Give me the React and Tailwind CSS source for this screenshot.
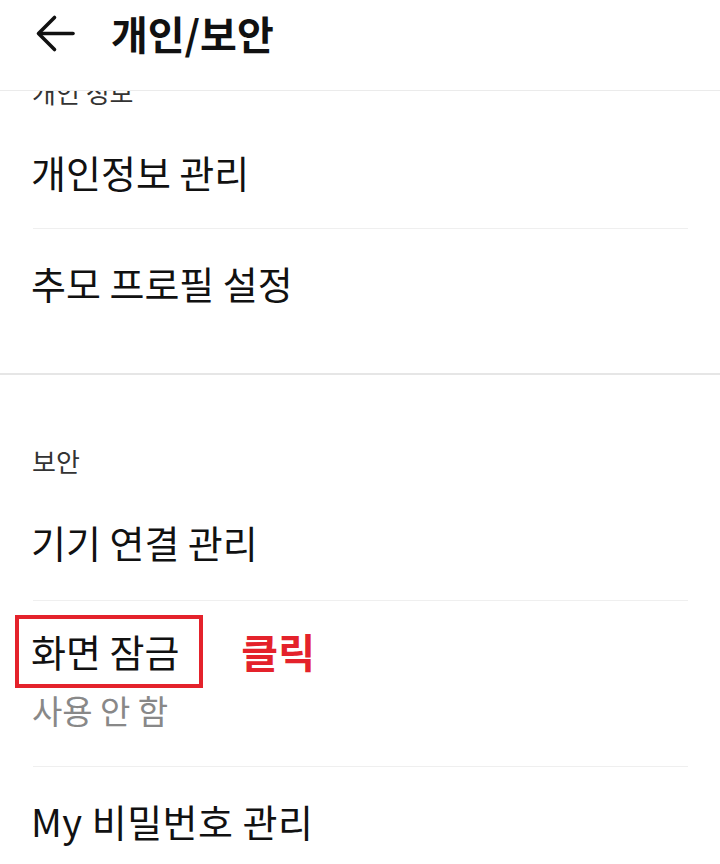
import React from 'react';

const font = { fontFamily: '"Noto Sans CJK KR", "Noto Sans", sans-serif' };

const Divider = () => <div className="h-px bg-[#efefef] ml-[33px] mr-[32px]" />;

const Row = ({ children, className = '' }) => (
    <div className={`flex items-center px-[31px] text-[38px] text-[#111] leading-none ${className}`}>
        {children}
    </div>
);

const App = () => {
    return (
        <div className="w-[720px] h-[864px] bg-white overflow-hidden flex flex-col" style={font}>
            {/* header */}
            <div className="relative z-10 h-[91px] shrink-0 bg-white border-b border-[#ebebeb] flex items-start pt-[10px]">
                <svg className="ml-[35px] mt-[3px]" width="40" height="40" viewBox="0 0 40 40" fill="none" stroke="#111" strokeWidth="3.6" strokeLinecap="round" strokeLinejoin="round">
                    <path d="M38 20.5H4.5" />
                    <path d="M19.5 4.5L3.5 20.5L19.5 36.5" />
                </svg>
                <h1 className="ml-[36px] text-[40px] font-bold text-[#111] leading-[46px]">개인/보안</h1>
            </div>

            <div className="flex-1 overflow-hidden">
                {/* 개인 정보 */}
                <div className="-mt-[20px] h-[40px] flex items-center px-[32px] text-[26px] text-[#333]">개인 정보</div>
                <Row className="h-[117px] pt-[4px]">개인정보 관리</Row>
                <Divider />
                <Row className="h-[112px] pb-[4px]">추모 프로필 설정</Row>
                <div className="h-[32px]" />
                <div className="h-[2px] bg-[#e6e6e6]" />

                {/* 보안 */}
                <div className="mt-[65px] h-[40px] flex items-center px-[32px] text-[26px] text-[#333]">보안</div>
                <Row className="h-[120px] pt-[4px]">기기 연결 관리</Row>
                <Divider />

                <div className="pt-[28px] pb-[36px]">
                    <div className="relative h-[44px] flex items-center px-[31px]">
                        <span className="text-[38px] text-[#111] leading-none">화면 잠금</span>
                        <span className="ml-[62px] text-[40px] font-bold text-[#e4222b] leading-none">클릭</span>
                        <div className="absolute left-[15px] top-[-14px] w-[188px] h-[73px] border-[4px] border-[#e4222b]" />
                    </div>
                    <div className="mt-[17px] h-[40px] flex items-center px-[32px] text-[33px] text-[#888] leading-none">사용 안 함</div>
                </div>
                <Divider />
                <Row className="h-[112px] pb-[4px]">
                    <span className="tracking-[0.5px]">My 비밀번호 관리</span>
                </Row>
            </div>
        </div>
    );
};

export default App;
